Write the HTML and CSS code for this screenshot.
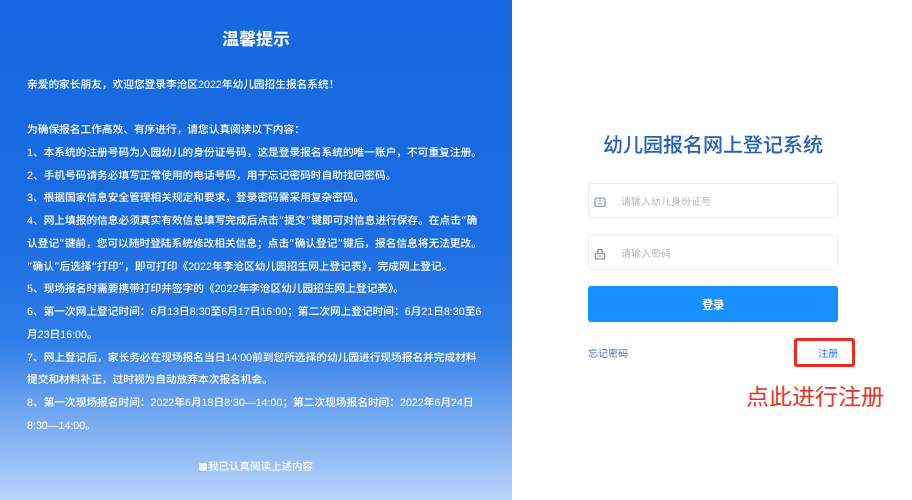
FILE: index.html
```html
<!DOCTYPE html>
<html lang="zh-CN">
<head>
<meta charset="utf-8">
<title>幼儿园报名网上登记系统</title>
<link rel="stylesheet" href="styles.css">
</head>
<body>
<main class="page">
  <section class="notice">
    <h2 class="notice-title">温馨提示</h2>
    <div class="notice-body">
      <p>亲爱的家长朋友，欢迎您登录李沧区2022年幼儿园招生报名系统！</p>
      <p class="blank">&nbsp;</p>
      <p>为确保报名工作高效、有序进行，请您认真阅读以下内容：</p>
      <p>1、本系统的注册号码为入园幼儿的身份证号码，这是登录报名系统的唯一账户，不可重复注册。</p>
      <p>2、手机号码请务必填写正常使用的电话号码，用于忘记密码时自助找回密码。</p>
      <p>3、根据国家信息安全管理相关规定和要求，登录密码需采用复杂密码。</p>
      <p>4、网上填报的信息必须真实有效信息填写完成后点击<span class="q">“</span>提交<span class="q">”</span>键即可对信息进行保存。在点击<span class="q">“</span>确<br>认登记<span class="q">”</span>键前，您可以随时登陆系统修改相关信息；点击<span class="q">“</span>确认登记<span class="q">”</span>键后，报名信息将无法更改。<br><span class="q">“</span>确认<span class="q">”</span>后选择<span class="q">“</span>打印<span class="q">”</span>，即可打印《2022年李沧区幼儿园招生网上登记表》，完成网上登记。</p>
      <p>5、现场报名时需要携带打印并签字的《2022年李沧区幼儿园招生网上登记表》。</p>
      <p>6、第一次网上登记时间：6月13日8:30至6月17日16:00；第二次网上登记时间：6月21日8:30至6<br>月23日16:00。</p>
      <p>7、网上登记后，家长务必在现场报名当日14:00前到您所选择的幼儿园进行现场报名并完成材料<br>提交和材料补正，过时视为自动放弃本次报名机会。</p>
      <p>8、第一次现场报名时间：2022年6月18日8:30—14:00；第二次现场报名时间：2022年6月24日<br>8:30—14:00。</p>
    </div>
    <label class="agree"><span class="check"></span>我已认真阅读上述内容</label>
  </section>
  <section class="login">
    <h1 class="login-title">幼儿园报名网上登记系统</h1>
    <div class="field">
      <svg class="field-icon" viewBox="0 0 12 12" aria-hidden="true"><rect x="1" y="2" width="10" height="8.5" rx="1.3" fill="#eef0f3" stroke="#8f959e" stroke-width="1.1"/><path d="M4 7.8h4M6 3.5v2.4" stroke="#a2a7af" stroke-width="1" fill="none"/></svg>
      <span class="placeholder">请输入幼儿身份证号</span>
    </div>
    <div class="field">
      <svg class="field-icon" viewBox="0 0 12 12" aria-hidden="true"><path d="M3.6 5.2V3.8a2.4 2.4 0 0 1 4.8 0v1.4" fill="none" stroke="#7f858e" stroke-width="1.1"/><rect x="1.2" y="5.2" width="9.6" height="5.8" rx="1" fill="#eef0f3" stroke="#7f858e" stroke-width="1.1"/><path d="M6 7.2v1.6" stroke="#7f858e" stroke-width="1.2"/></svg>
      <span class="placeholder">请输入密码</span>
    </div>
    <button class="submit" type="button">登录</button>
    <div class="links">
      <a class="link">忘记密码</a>
      <a class="link register">注册</a>
    </div>
    <p class="hint">点此进行注册</p>
  </section>
</main>
</body>
</html>
```
FILE: styles.css
```css
*, *::before { box-sizing: border-box; }
html, body { margin: 0; padding: 0; }
body {
  width: 912px;
  height: 500px;
  overflow: hidden;
  background: #fff;
  font-family: "Noto Sans CJK SC", "Liberation Sans", sans-serif;
  text-rendering: geometricPrecision;
}
.page { display: flex; height: 500px; }

.notice {
  width: 512px;
  height: 500px;
  padding: 25px 27px 0;
  color: #fff;
  display: flex;
  flex-direction: column;
  background: linear-gradient(180deg, #1668e0 0%, #1a6ce2 45%, #2f7de8 68%, #77aaf0 84%, #b8d5fb 100%);
}
.notice-title {
  margin: 0;
  font-size: 17px;
  line-height: 26px;
  font-weight: 700;
  text-align: center;
  filter: blur(.35px);
}
.notice-body {
  margin-top: 22.5px;
  font-family: "Liberation Sans", "Noto Sans CJK SC", sans-serif;
  font-size: 10.7px;
  font-weight: 500;
  line-height: 22.75px;
  white-space: nowrap;
  filter: blur(.35px);
}
.notice-body p { margin: 0; }
.q { font-family: "DejaVu Sans", sans-serif; }
.agree {
  margin-top: 21.5px;
  font-size: 10.5px;
  font-weight: 500;
  line-height: 16px;
  display: flex;
  justify-content: center;
  align-items: center;
  opacity: .92;
  filter: blur(.35px);
}
.check {
  width: 8px;
  height: 8px;
  border-radius: 1px;
  background: #f4f7fc;
  box-shadow: 0 0 0 1px #a3b6d6;
  margin-right: 1px;
}

.login {
  flex: 1;
  padding: 128px 74px 0 76px;
  display: flex;
  flex-direction: column;
}
.login-title {
  margin: 0 -10px 23px;
  font-size: 20px;
  line-height: 32px;
  font-weight: 500;
  color: #2461bd;
  text-align: center;
  white-space: nowrap;
  filter: blur(.35px);
}
.field {
  height: 35px;
  margin-bottom: 17px;
  padding-left: 5px;
  display: flex;
  align-items: center;
  border: 1px solid #eceef1;
  border-radius: 3px;
  background: #fff;
}
.field-icon { width: 12px; height: 12px; flex: none; margin-top: 3px; }
.placeholder {
  margin: 0 0 1px 15px;
  font-size: 10px;
  color: #b7bbc1;
  filter: blur(.35px);
}
.submit {
  height: 36px;
  margin-top: -1px;
  border: 0;
  border-radius: 3px;
  background: #1890ff;
  color: #fff;
  font: 700 11px "Noto Sans CJK SC", sans-serif;
}
.links {
  margin-top: 22px;
  height: 16px;
  display: flex;
  justify-content: space-between;
  align-items: center;
}
.link { font-size: 10px; color: #3a78c6; }
.register { position: relative; }
.register::before {
  content: "";
  position: absolute;
  left: -24px;
  top: -7px;
  width: 61px;
  height: 29px;
  border: 3px solid #ee2a1c;
  border-radius: 3px;
}
.hint {
  margin: 20px -46px 0 auto;
  font-size: 23px;
  line-height: 30px;
  color: #e5362a;
  white-space: nowrap;
}
```
